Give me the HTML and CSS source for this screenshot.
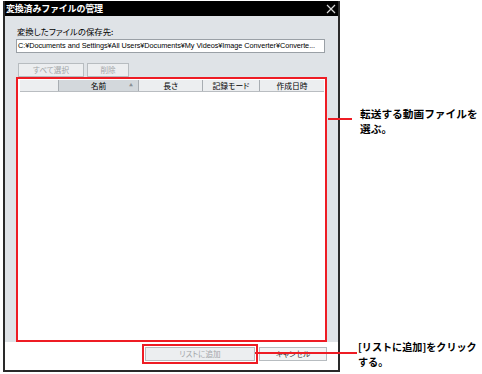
FILE: index.html
```html
<!DOCTYPE html>
<html lang="ja">
<head>
  <meta charset="UTF-8">
  <title>変換済みファイルの管理</title>
  <link rel="stylesheet" href="styles.css">
</head>
<body>
  <div class="stage">
    <div class="dialog">
      <div class="titlebar">
        <span class="title">変換済みファイルの管理</span>
        <svg class="close" width="10" height="10" viewBox="0 0 10 10">
          <path d="M1 1 L9 9 M9 1 L1 9" stroke="#d8d8d8" stroke-width="1.2" fill="none"/>
        </svg>
      </div>

      <div class="dialog-body">
        <div class="field-label">変換したファイルの保存先:</div>
        <div class="path-box">C:¥Documents and Settings¥All Users¥Documents¥My Videos¥Image Converter¥Converte...</div>

        <div class="tool-row">
          <div class="btn btn-disabled btn-all">すべて選択</div>
          <div class="btn btn-disabled btn-del">削除</div>
        </div>

        <div class="file-list">
          <div class="list-head">
            <div class="col col-check"></div>
            <div class="col col-name sorted">名前<span class="sort-arrow">▲</span></div>
            <div class="col col-len">長さ</div>
            <div class="col col-mode">記録モード</div>
            <div class="col col-date">作成日時</div>
          </div>
          <div class="list-rows"></div>
        </div>
      </div>

      <div class="dialog-foot">
        <div class="btn btn-disabled btn-add">リストに追加</div>
        <div class="btn btn-cancel">キャンセル</div>
      </div>
    </div>

    <!-- annotations -->
    <div class="callout callout-list">
      <div class="callout-line"></div>
      <div class="callout-text">転送する動画ファイルを<br>選ぶ。</div>
    </div>
    <div class="callout callout-add">
      <div class="callout-line"></div>
      <div class="callout-text">[リストに追加]をクリック<br>する。</div>
    </div>
  </div>
</body>
</html>
```

FILE: styles.css
```css
* {
  margin: 0;
  padding: 0;
  box-sizing: border-box;
}

body {
  background: #ffffff;
  font-family: "Noto Sans CJK JP", "Noto Sans", sans-serif;
  color: #000;
}

.stage {
  position: relative;
  width: 482px;
  height: 374px;
  padding: 1px 0 0 3px;
}

.dialog {
  width: 337px;
  height: 371px;
  border: 2px solid #2a2a2a;
  border-top: none;
  display: flex;
  flex-direction: column;
  background: #fff;
}

.titlebar {
  height: 16px;
  background: #000;
  color: #fff;
  display: flex;
  justify-content: space-between;
  align-items: center;
  padding: 0 2px 0 1px;
}

.title {
  font-size: 9px;
  font-weight: bold;
  letter-spacing: -0.2px;
}

.close {
  display: block;
}

.dialog-body {
  flex: 1;
  background: #dfe3e7;
  padding: 9px 9px 0 11px;
  display: flex;
  flex-direction: column;
  font-feature-settings: "palt";
}

.field-label {
  font-size: 8.4px;
  line-height: 12px;
  margin-left: 1px;
}

.path-box {
  margin-top: 2px;
  height: 14px;
  width: 309px;
  background: #fff;
  border: 1px solid #9aa0a6;
  font-family: "Liberation Sans", Arial, sans-serif;
  font-size: 7.3px;
  line-height: 12px;
  padding-left: 1px;
  white-space: nowrap;
  overflow: hidden;
  letter-spacing: -0.05px;
}

.tool-row {
  display: flex;
  gap: 3px;
  margin-top: 10px;
  padding-left: 2px;
}

.btn {
  height: 14px;
  font-size: 7.6px;
  line-height: 12px;
  text-align: center;
  border: 1px solid #b7bcc0;
  background: #eceef0;
}

.btn-disabled {
  color: #a3a6a9;
}

.btn-all {
  width: 66px;
}

.btn-del {
  width: 42px;
}

.file-list {
  width: 311px;
  height: 265px;
  border: 2px solid #ee1c24;
  background: #fff;
  padding: 1px;
  display: flex;
  flex-direction: column;
}

.list-head {
  display: flex;
  height: 12px;
  margin-left: 1px;
  background: #eceef0;
  border-bottom: 1px solid #b9bdc1;
}

.col {
  height: 100%;
  font-size: 7.8px;
  line-height: 11px;
  text-align: center;
  border-right: 1px solid #a8adb2;
  position: relative;
}

.col-check {
  width: 39px;
}

.col-name {
  width: 80px;
}

.sorted {
  background: #d3d8dc;
}

.sort-arrow {
  position: absolute;
  right: 5px;
  top: 0;
  font-size: 4px;
  color: #8a8f94;
}

.col-len {
  width: 64px;
}

.col-mode {
  width: 57px;
}

.col-date {
  width: 64px;
  border-right: none;
}

.list-rows {
  flex: 1;
}

.dialog-foot {
  height: 29px;
  display: flex;
  justify-content: flex-end;
  align-items: flex-start;
  gap: 4px;
  padding: 5px 11px 0 0;
  font-feature-settings: "palt";
}

.btn-add {
  width: 110px;
  outline: 2px solid #ee1c24;
  outline-offset: 1px;
  background: #eceef0;
}

.btn-cancel {
  width: 68px;
  color: #333;
  background: #f3f4f5;
}

/* annotations */
.callout {
  position: absolute;
  display: flex;
  align-items: flex-start;
}

.callout-line {
  height: 2px;
  background: #ee1c24;
}

.callout-text {
  font-weight: bold;
  line-height: 15px;
  white-space: nowrap;
}

.callout-list {
  left: 328px;
  top: 106px;
}

.callout-list .callout-text {
  font-size: 10.7px;
}

.callout-list .callout-line {
  width: 24px;
  margin-top: 12px;
  margin-right: 8px;
}

.callout-add {
  left: 255px;
  top: 339px;
}

.callout-add .callout-text {
  font-size: 10.1px;
}

.callout-add .callout-line {
  width: 102px;
  margin-top: 13px;
  margin-right: 1px;
}
```
